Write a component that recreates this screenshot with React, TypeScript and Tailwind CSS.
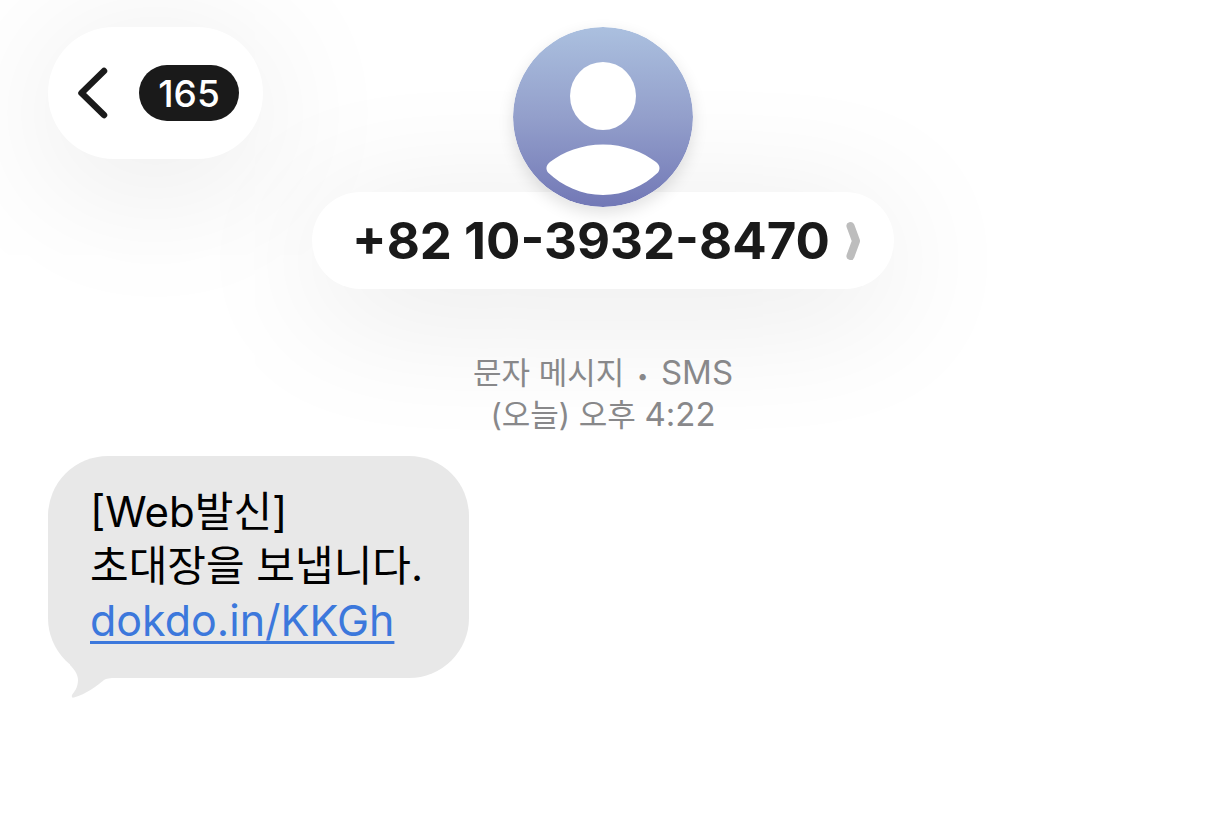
import React from 'react';

const CONTACT = {
    unread: 165,
    phone: '+82 10-3932-8470',
};

const MESSAGE = {
    lines: ['[Web발신]', '초대장을 보냅니다.'],
    link: 'dokdo.in/KKGh',
};

const Avatar: React.FC = () => (
    <svg viewBox="0 0 180 180" className="relative z-10 size-45 rounded-full shadow-[0_6px_16px_rgba(0,0,0,0.12)]" aria-hidden="true">
        <defs>
            <linearGradient id="avatar-fill" x1="0" y1="0" x2="0" y2="1">
                <stop offset="0" stopColor="#abc0df" />
                <stop offset="0.5" stopColor="#939fcb" />
                <stop offset="1" stopColor="#7278b6" />
            </linearGradient>
        </defs>
        <circle cx="90" cy="90" r="90" fill="url(#avatar-fill)" />
        <ellipse cx="90" cy="69" rx="33" ry="34" fill="#fff" />
        <path
            d="M90 117.500c21 0 40 7.500 53 17.500c4 3 4.500 7 2 10.500C131 159 111 168 90 168S49 159 35 145.500c-2.500-3.500-2-7.500 2-10.500C50 125 69 117.500 90 117.500Z"
            fill="#fff"
        />
    </svg>
);

const Header: React.FC = () => (
    <header className="grid grid-cols-[1fr_auto_1fr] items-start">
        <button
            aria-label="Back"
            className="flex items-center gap-7 justify-self-start rounded-full bg-white py-9 pr-6 pl-[27px] shadow-[0_20px_150px_rgba(0,0,0,0.10)]"
        >
            <svg viewBox="0 0 36 60" className="h-15 w-9" fill="none" stroke="#1a1a1a" strokeWidth="6.500" strokeLinecap="round" strokeLinejoin="round">
                <path d="M29 8L6.500 30L29 52" />
            </svg>
            <span className="flex h-14 w-25 items-center justify-center rounded-full bg-[#1a1a1a] pt-0.5 text-[37px] font-medium text-white">
                {CONTACT.unread}
            </span>
        </button>
        <div className="flex flex-col items-center">
            <Avatar />
            <button className="-mt-[15px] flex items-center gap-4 rounded-full bg-white pt-[17px] pr-8 pb-4 pl-10 shadow-[0_20px_140px_rgba(0,0,0,0.10)]">
                <span className="text-[51px] leading-16 font-bold text-[#1a1a1a]">{CONTACT.phone}</span>
                <svg viewBox="0 0 16 40" className="h-10 w-4" fill="none" stroke="#bdbdbd" strokeWidth="8" strokeLinecap="round" strokeLinejoin="round" aria-hidden="true">
                    <path d="M4.500 5L10 20L4.500 35" />
                </svg>
            </button>
        </div>
    </header>
);

const Bubble: React.FC = () => (
    <div className="relative mt-5 self-start rounded-[60px] bg-[#e8e8e8] pt-[29px] pr-[46px] pb-[31px] pl-[42px] text-[42px] leading-[54px] text-black">
        {MESSAGE.lines.map((line) => (
            <p key={line}>{line}</p>
        ))}
        <p className="text-[43px]">
            <a href="https://dokdo.in/KKGh" className="text-[#3c78dc] underline decoration-3 underline-offset-5">
                {MESSAGE.link}
            </a>
        </p>
        <svg viewBox="0 0 60 50" className="absolute -bottom-5 left-2 h-[50px] w-15" fill="#e8e8e8" aria-hidden="true">
            <path d="M14 17C18 21 22 26 22 32C22 40 18 44 16 47C15.500 49 16 50 18 49.500C30 46 41 38 48 32C50 30.500 54 30 60 30V10H14Z" />
        </svg>
    </div>
);

const App: React.FC = () => {
    return (
        <main className="flex min-h-screen flex-col overflow-hidden bg-white px-12 pt-[27px] font-[Inter,'Noto_Sans_CJK_KR',sans-serif]">
            <Header />
            <div className="relative mt-[63px] text-center text-[31px] leading-[42px] text-[#88888a]">
                <p>
                    문자 메시지 <span className="mx-1 align-middle text-xl leading-none">•</span> <span className="text-[33px] leading-none">SMS</span>
                </p>
                <p>
                    (오늘) 오후 <span className="text-[33px] leading-none">4:22</span>
                </p>
            </div>
            <Bubble />
        </main>
    );
};

export default App;
